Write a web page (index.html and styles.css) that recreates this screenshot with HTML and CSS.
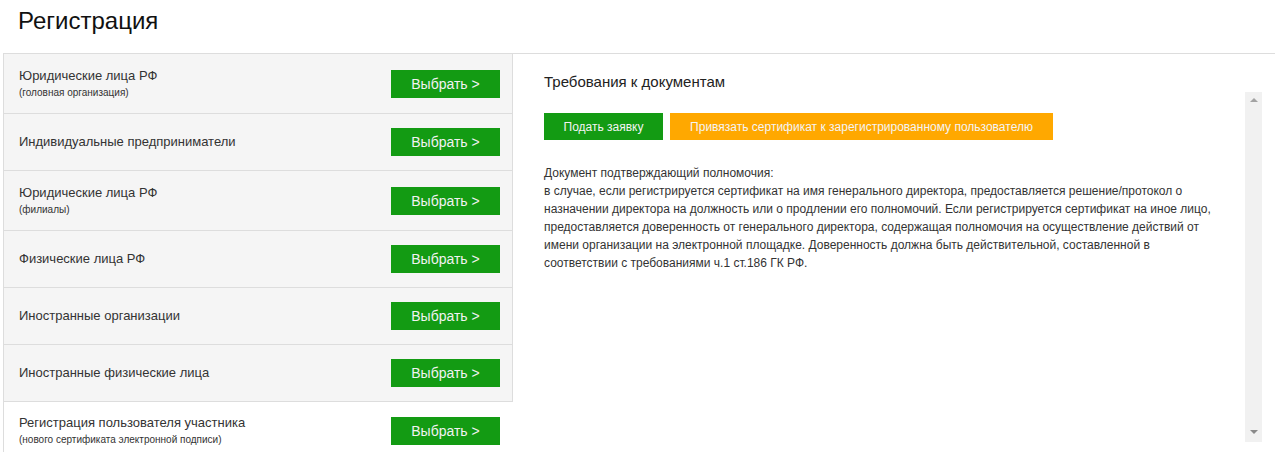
FILE: index.html
```html
<!DOCTYPE html>
<html lang="ru">
<head>
  <meta charset="UTF-8" />
  <title>Регистрация</title>
  <link rel="stylesheet" href="styles.css">
</head>
<body>
  <h1 class="title">Регистрация</h1>
  <div class="reg">
    <div class="types">
      <div class="type">
        <div class="type-name">Юридические лица РФ<small>(головная организация)</small></div>
        <button class="pick">Выбрать &gt;</button>
      </div>
      <div class="type">
        <div class="type-name">Индивидуальные предприниматели</div>
        <button class="pick">Выбрать &gt;</button>
      </div>
      <div class="type">
        <div class="type-name">Юридические лица РФ<small>(филиалы)</small></div>
        <button class="pick">Выбрать &gt;</button>
      </div>
      <div class="type">
        <div class="type-name">Физические лица РФ</div>
        <button class="pick">Выбрать &gt;</button>
      </div>
      <div class="type">
        <div class="type-name">Иностранные организации</div>
        <button class="pick">Выбрать &gt;</button>
      </div>
      <div class="type">
        <div class="type-name">Иностранные физические лица</div>
        <button class="pick">Выбрать &gt;</button>
      </div>
      <div class="type user">
        <div class="type-name">Регистрация пользователя участника<small>(нового сертификата электронной подписи)</small></div>
        <button class="pick">Выбрать &gt;</button>
      </div>
    </div>

    <div class="docs">
      <h2 class="docs-title">Требования к документам</h2>
      <div class="docs-body">
        <div class="docs-content">
          <div class="actions">
            <button class="btn btn-green">Подать заявку</button>
            <button class="btn btn-orange">Привязать сертификат к зарегистрированному пользователю</button>
          </div>
          <p class="docs-text">
            Документ подтверждающий полномочия:<br>
            в случае, если регистрируется сертификат на имя генерального директора, предоставляется решение/протокол о назначении директора на должность или о продлении его полномочий. Если регистрируется сертификат на иное лицо, предоставляется доверенность от генерального директора, содержащая полномочия на осуществление действий от имени организации на электронной площадке. Доверенность должна быть действительной, составленной в соответствии с требованиями ч.1 ст.186 ГК РФ.
          </p>
        </div>
        <div class="scrollbar">
          <span class="arrow-up"></span>
          <span class="arrow-down"></span>
        </div>
      </div>
    </div>
  </div>
</body>
</html>
```

FILE: styles.css
```css
body {
  margin: 0;
  font-family: 'Liberation Sans', Arial, sans-serif;
  color: #333;
  background: #fff;
}
.title {
  margin: 0;
  height: 46px;
  padding: 7px 0 0 18px;
  font-size: 24px;
  font-weight: normal;
  line-height: 28px;
  color: #111;
}
.reg {
  display: flex;
  margin: 0 5px 0 3px;
  border-top: 1px solid #ddd;
}
.types {
  width: 509px;
  flex-shrink: 0;
  border-left: 1px solid #ddd;
}
.type {
  display: flex;
  align-items: center;
  justify-content: space-between;
  min-height: 28px;
  padding: 14px 12px 14px 15px;
  background: #f5f5f5;
  border-right: 1px solid #ddd;
  border-bottom: 1px solid #ddd;
}
.type.user {
  background: #fff;
  border-right-color: transparent;
  border-bottom: none;
  padding-top: 13px;
}
.type-name {
  font-size: 13px;
  line-height: 16px;
}
.type-name small {
  display: block;
  margin-top: 2px;
  font-size: 10px;
  line-height: 13px;
}
.pick {
  width: 109px;
  height: 28px;
  border: none;
  background: #139b13;
  color: #f2f2f2;
  font-family: inherit;
  font-size: 14px;
  cursor: pointer;
}
.docs {
  flex: 1;
  padding: 19px 13px 0 31px;
}
.docs-title {
  margin: 0 0 1px;
  font-size: 15px;
  font-weight: normal;
  line-height: 18px;
  color: #222;
}
.docs-body {
  display: flex;
  height: 350px;
}
.docs-content {
  flex: 1;
  padding: 21px 20px 0 0;
}
.actions {
  display: flex;
  gap: 7px;
}
.btn {
  height: 27px;
  border: none;
  color: #f4f4f4;
  font-family: inherit;
  font-size: 12px;
  cursor: pointer;
}
.btn-green {
  width: 119px;
  background: #139b13;
}
.btn-orange {
  width: 383px;
  background: #ffa800;
}
.docs-text {
  margin: 24px 0 0;
  font-size: 12px;
  line-height: 18px;
  color: #333;
}
.scrollbar {
  width: 17px;
  background: #f1f1f1;
  display: flex;
  flex-direction: column;
  justify-content: space-between;
  align-items: center;
  padding: 6px 0 8px;
  box-sizing: border-box;
}
.arrow-up {
  border-left: 4px solid transparent;
  border-right: 4px solid transparent;
  border-bottom: 4px solid #a3a3a3;
}
.arrow-down {
  border-left: 4px solid transparent;
  border-right: 4px solid transparent;
  border-top: 4px solid #8a8a8a;
}
```
